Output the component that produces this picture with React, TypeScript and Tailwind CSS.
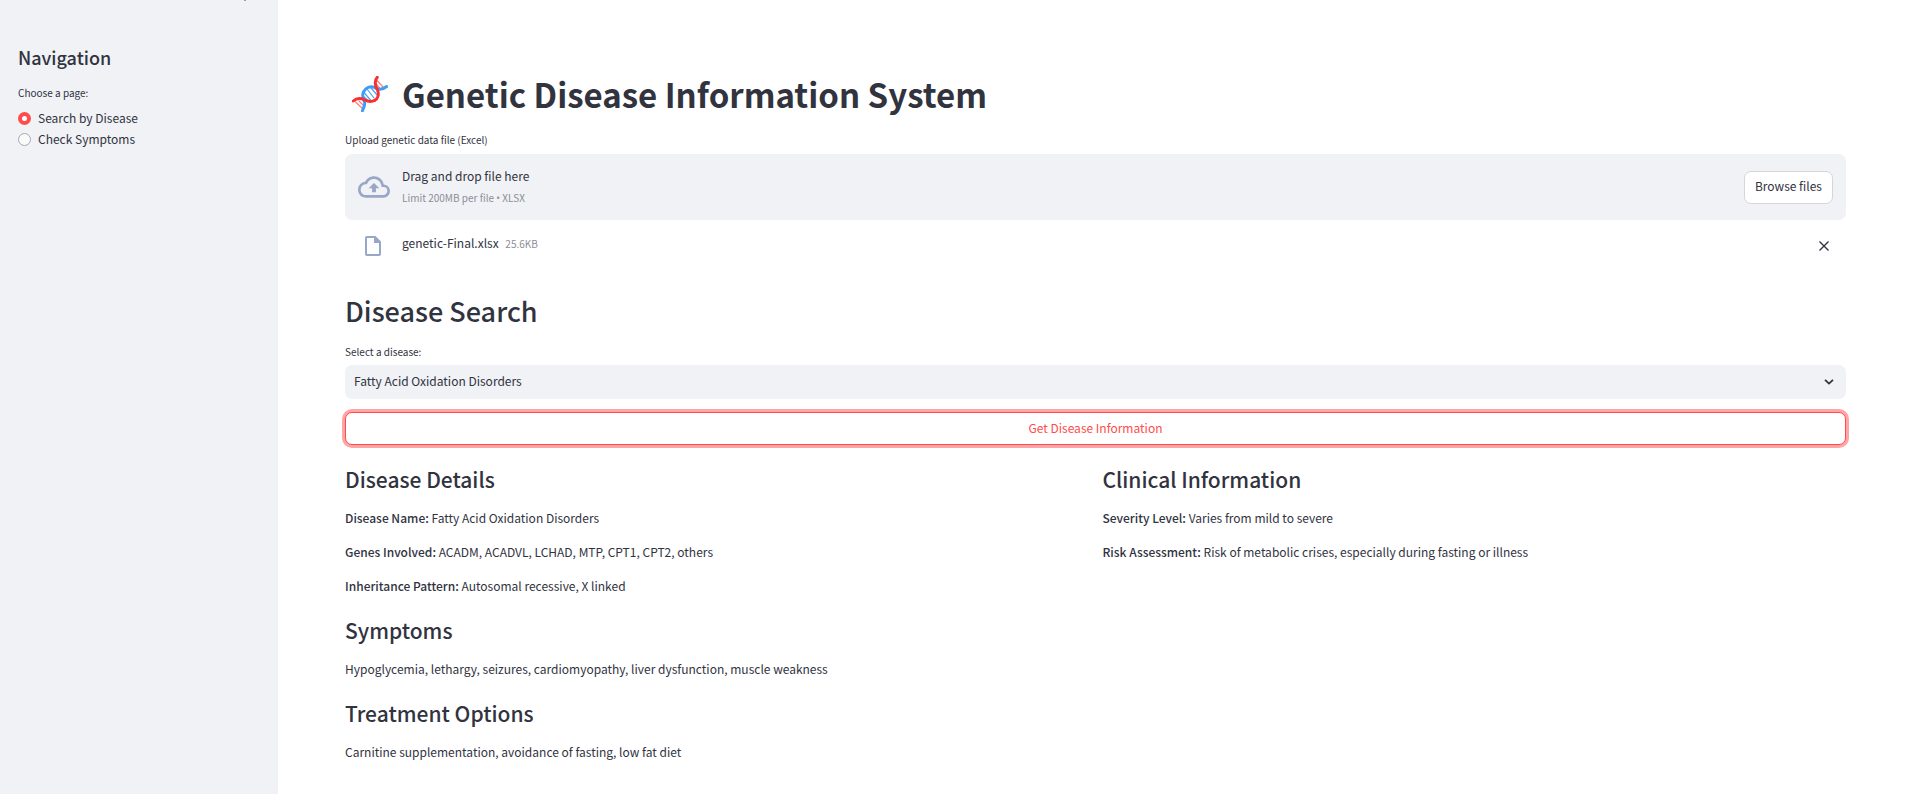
import { useState } from "react";

const PAGES = ["Search by Disease", "Check Symptoms"];

const DISEASES = ["Fatty Acid Oxidation Disorders"];

const DETAILS = [
  { label: "Disease Name:", value: "Fatty Acid Oxidation Disorders" },
  { label: "Genes Involved:", value: "ACADM, ACADVL, LCHAD, MTP, CPT1, CPT2, others" },
  { label: "Inheritance Pattern:", value: "Autosomal recessive, X linked" },
];

const CLINICAL = [
  { label: "Severity Level:", value: "Varies from mild to severe" },
  { label: "Risk Assessment:", value: "Risk of metabolic crises, especially during fasting or illness" },
];

const DnaIcon = () => (
  <svg viewBox="0 0 36 36" className="w-9 h-9 shrink-0" fill="none" strokeLinecap="round" aria-hidden="true">
    {/* rungs */}
    <g strokeWidth="1.200">
      <path d="M3.500 26l7 6.500M7 25l4.500 4.500" stroke="#ff7d7d" />
      <path d="M12 16.500l6.500 7.500M15 13l7 9M19 12l6.500 7.500M11.500 20.500l3.500 3" stroke="#4aa3f7" />
      <path d="M25 4.500l6.500 7M24.500 8.500l3.500 4" stroke="#ff7d7d" />
    </g>
    <path d="M10.500 34.700C11.500 31 13.500 29.500 12.500 26 11 22.500 9.500 20 11.500 16" stroke="#3f9df7" strokeWidth="3" />
    <path d="M1.300 25C4 22.500 8.500 22 12.500 23.800 16 25.600 19.500 26 22.500 24.500" stroke="#f8312f" strokeWidth="3" />
    <path d="M11.500 16C13.500 11.500 18.500 9.500 22.500 11.500 26.500 14 31 13.500 34.700 10.500" stroke="#3f9df7" strokeWidth="3" />
    <path d="M22.500 24.500C26.500 22.500 27 18 25.500 14 23 9.500 22 5 25.300 1.300" stroke="#f8312f" strokeWidth="3" />
  </svg>
);

const UploadIcon = () => (
  <svg viewBox="0 0 24 24" className="w-8 h-8 shrink-0" fill="#98a7c7" aria-hidden="true">
    <path d="M19.350 10.040A7.490 7.490 0 0 0 12 4C9.110 4 6.600 5.640 5.350 8.040A5.994 5.994 0 0 0 0 14c0 3.310 2.690 6 6 6h13c2.760 0 5-2.240 5-5 0-2.640-2.050-4.780-4.650-4.960zM19 18H6c-2.210 0-4-1.790-4-4 0-2.050 1.530-3.760 3.560-3.970l1.070-.11.5-.95A5.469 5.469 0 0 1 12 6c2.620 0 4.880 1.860 5.390 4.430l.3 1.500 1.530.11A2.980 2.980 0 0 1 22 15c0 1.650-1.350 3-3 3zM8 13h2.550v3h2.900v-3H16l-4-4z" />
  </svg>
);

const FileIcon = () => (
  <svg viewBox="0 0 16 20" className="w-4 h-5 shrink-0" fill="#98a7c7" aria-hidden="true">
    <path fillRule="evenodd" d="M2 0h8.500L16 5.500V18a2 2 0 0 1-2 2H2a2 2 0 0 1-2-2V2a2 2 0 0 1 2-2zm0 2v16h12V7H9V2z" />
  </svg>
);

const CloseIcon = () => (
  <svg viewBox="0 0 10 10" className="w-[10px] h-[10px]" stroke="#31333f" strokeWidth="1.400" aria-hidden="true">
    <path d="M.5.5l9 9M9.500.5l-9 9" />
  </svg>
);

const Field = ({ label, value }: { label: string; value: string }) => (
  <p className="leading-[21px]">
    <strong className="font-medium">{label}</strong> {value}
  </p>
);

const SectionTitle = ({ children }: { children: string }) => (
  <h3 className="text-[21px] leading-7 font-medium">{children}</h3>
);

const Sidebar = () => {
  const [page, setPage] = useState(PAGES[0]);
  return (
    <aside className="relative w-[278px] shrink-0 bg-[#f0f2f6] px-[18px] pt-[45px]">
      {/* collapse arrow, scrolled almost out of view */}
      <svg viewBox="0 0 3 1" className="absolute top-0 left-[244px] w-[3px] h-px" fill="#9a9ca6" aria-hidden="true">
        <path d="M0 0h2v1H0z" />
      </svg>
      <h2 className="text-[18px] leading-6 font-medium">Navigation</h2>
      <fieldset className="mt-4">
        <legend className="text-[10px] leading-4">Choose a page:</legend>
        <div className="mt-[7px] flex flex-col gap-px">
          {PAGES.map((name) => (
            <label key={name} className="flex items-center gap-[7px] leading-5">
              <input
                type="radio"
                name="page"
                checked={page === name}
                onChange={() => setPage(name)}
                className="appearance-none w-[13px] h-[13px] rounded-full border border-[#a3a8b4] bg-[#fafafb] checked:border-4 checked:border-[#ff4b4b] checked:bg-white"
              />
              {name}
            </label>
          ))}
        </div>
      </fieldset>
    </aside>
  );
};

const Uploader = () => (
  <section>
    <label htmlFor="genetic-file" className="block text-[10px] leading-4">Upload genetic data file (Excel)</label>
    <input id="genetic-file" type="file" accept=".xlsx" className="sr-only" />
    <div className="mt-[6px] flex items-center rounded-[7px] bg-[#f0f2f6] px-[13px] h-[66px]">
      <UploadIcon />
      <div className="ml-3 flex-1">
        <p className="leading-[21px]">Drag and drop file here</p>
        <p className="mt-px text-[10px] leading-[21px] text-[#8c8e98]">
          Limit 200MB per file <span className="font-['Open_Sans',sans-serif]">•</span> XLSX
        </p>
      </div>
      <button type="button" className="h-[33px] rounded-[7px] border border-[#d6d6d9] bg-white px-[10px] pb-[2px]">
        Browse files
      </button>
    </div>
    <div className="mt-[13px] flex items-start pl-5 pr-[17px] h-[26px]">
      <div className="flex h-[26px] items-center">
        <FileIcon />
      </div>
      <p className="ml-[21px] flex-1 leading-5">
        genetic-Final.xlsx <span className="ml-1 text-[10px] text-[#8c8e98]">25.6KB</span>
      </p>
      <button type="button" aria-label="Remove file" className="h-[26px]">
        <CloseIcon />
      </button>
    </div>
  </section>
);

const DiseaseSearch = () => (
  <section className="mt-[34px]">
    <h2 className="text-[27px] leading-9 font-medium">Disease Search</h2>
    <label htmlFor="disease" className="mt-[15px] block text-[10px] leading-4">Select a disease:</label>
    <div className="relative mt-[5px]">
      <select id="disease" className="block w-full h-[34px] appearance-none rounded-[7px] bg-[#f0f2f6] px-[9px] pb-[2px]">
        {DISEASES.map((name) => (
          <option key={name}>{name}</option>
        ))}
      </select>
      <svg viewBox="0 0 10 6" className="pointer-events-none absolute right-3 top-[14px] w-[10px] h-[6px]" fill="none" stroke="#31333f" strokeWidth="1.800" aria-hidden="true">
        <path d="M1 .8 5 4.600 9 .8" />
      </svg>
    </div>
    <button
      type="button"
      className="mt-[13px] block w-full h-[33px] rounded-[7px] border border-[#ff4b4b] bg-white pb-[2px] text-[#ff4b4b] ring-3 ring-[#ff4b4b]/50"
    >
      Get Disease Information
    </button>
  </section>
);

const App = () => {
  return (
    <div className="flex min-h-screen bg-white text-[12px] text-[#31333f] font-['Noto_Sans_CJK_SC',sans-serif]">
      <Sidebar />
      <main className="flex-1 pl-[67px] pr-[69px] pt-[71px] pb-6">
        <h1 className="flex items-center gap-[14px] pl-[7px] text-[33px] leading-[46px] font-bold">
          <DnaIcon />
          Genetic Disease Information System
        </h1>
        <div className="mt-[15px]">
          <Uploader />
        </div>
        <DiseaseSearch />
        <div className="mt-5 grid grid-cols-2 gap-[14px]">
          <section>
            <SectionTitle>Disease Details</SectionTitle>
            <div className="mt-[14px] flex flex-col gap-[13px]">
              {DETAILS.map((item) => (
                <Field key={item.label} {...item} />
              ))}
            </div>
          </section>
          <section>
            <SectionTitle>Clinical Information</SectionTitle>
            <div className="mt-[14px] flex flex-col gap-[13px]">
              {CLINICAL.map((item) => (
                <Field key={item.label} {...item} />
              ))}
            </div>
          </section>
        </div>
        <section className="mt-5">
          <SectionTitle>Symptoms</SectionTitle>
          <p className="mt-[14px] leading-[21px]">
            Hypoglycemia, lethargy, seizures, cardiomyopathy, liver dysfunction, muscle weakness
          </p>
        </section>
        <section className="mt-5">
          <SectionTitle>Treatment Options</SectionTitle>
          <p className="mt-[14px] leading-[21px]">Carnitine supplementation, avoidance of fasting, low fat diet</p>
        </section>
      </main>
    </div>
  );
};

export default App;
